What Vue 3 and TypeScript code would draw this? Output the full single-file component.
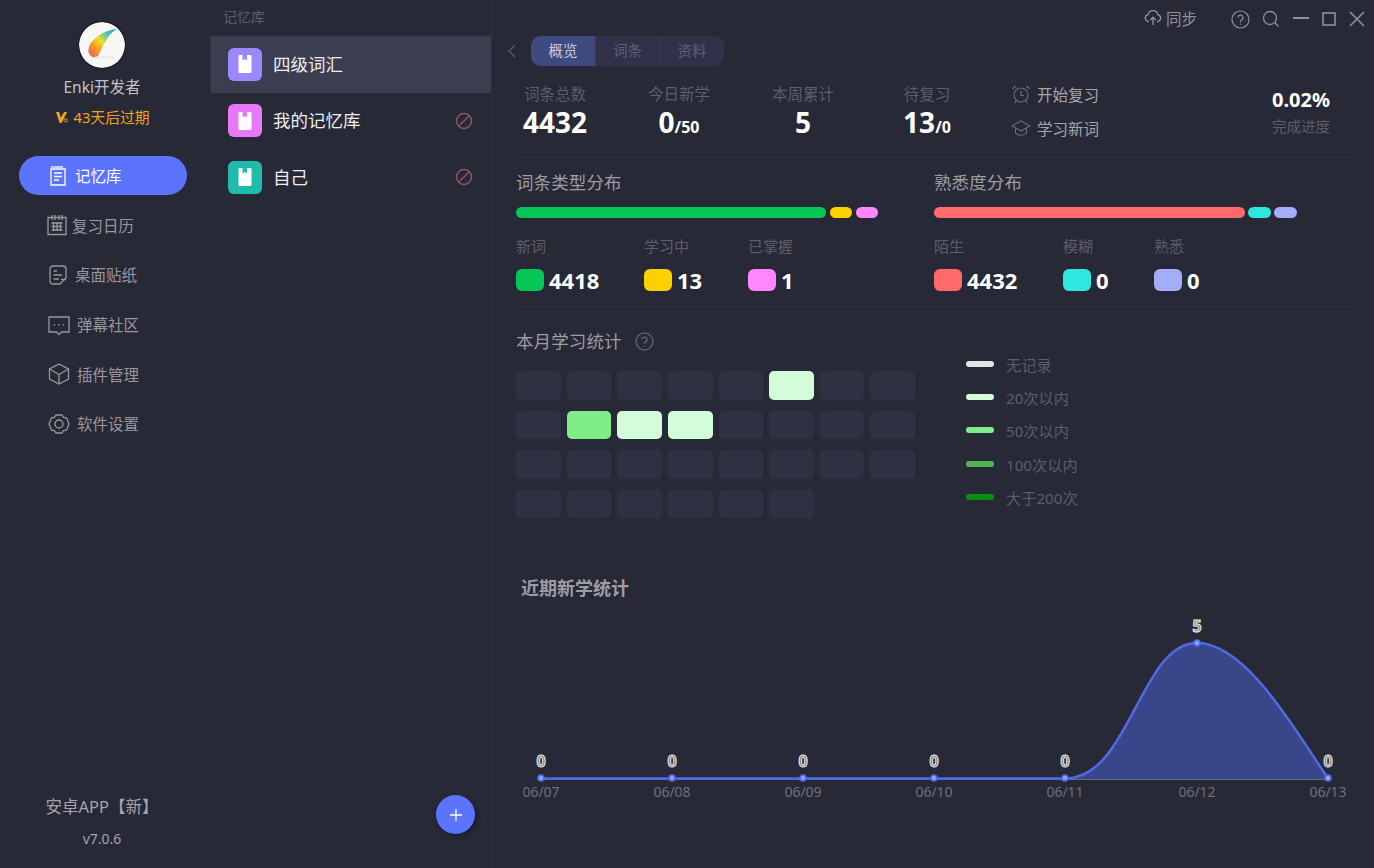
<template>
  <div class="app">
    <!-- 左侧导航 -->
    <aside class="side">
      <div class="avatar">
        <svg width="46" height="46" viewBox="0 0 46 46">
          <defs>
            <linearGradient id="feather" x1="0.05" y1="0.95" x2="0.95" y2="0.05">
              <stop offset="0" stop-color="#ee5f5c" />
              <stop offset="0.3" stop-color="#f6a324" />
              <stop offset="0.5" stop-color="#f3dd2c" />
              <stop offset="0.7" stop-color="#6fcf8f" />
              <stop offset="1" stop-color="#1fa6e6" />
            </linearGradient>
          </defs>
          <circle cx="23" cy="23" r="23" fill="#f7f7f5" />
          <path d="M10 25C12 18 24 8 38 7C30 11 26 20 19 34C16 36 12 35 11 33C9 31 9 28 10 25Z" fill="url(#feather)" />
          <path d="M12 35C19 38 26 33 36 36" fill="none" stroke="#e4dcd6" stroke-width="0.8" />
        </svg>
      </div>
      <div class="user">Enki开发者</div>
      <div class="expire">
        <svg width="12" height="12" viewBox="0 0 13 13">
          <path d="M0 1H3.500L5 7L9 1H12L6 13H4Z" fill="#f0a41e" />
          <circle cx="10.500" cy="10" r="1.800" fill="none" stroke="#f0a41e" />
        </svg>
        <span>43天后过期</span>
      </div>
      <nav class="nav">
        <div v-for="item in navs" :key="item.name" class="nav-item" :class="{ active: item.active }">
          <svg class="nav-icon" :style="{ marginLeft: item.left + 'px', marginRight: item.right + 'px' }" width="22" height="22" viewBox="0 0 22 22" fill="none" stroke="currentColor" stroke-width="1.300">
            <path v-for="(d, i) in item.paths" :key="i" :d="d" />
          </svg>
          <span>{{ item.name }}</span>
        </div>
      </nav>
      <div class="side-foot">
        <div class="android">安卓APP【新】</div>
        <div class="version">v7.0.6</div>
      </div>
    </aside>

    <!-- 记忆库列表 -->
    <section class="list">
      <div class="list-title">记忆库</div>
      <div v-for="book in books" :key="book.name" class="book" :class="{ current: book.current }">
        <div class="book-icon" :style="{ background: book.color }">
          <svg width="16" height="20" viewBox="0 0 16 20">
            <path d="M2.500 1H5.500V6.500L7.750 5L10 6.500V1H13.500Q14.500 1 14.500 2V18Q14.500 19 13.500 19H2.500Q1.500 19 1.500 18V2Q1.500 1 2.500 1Z" fill="#fff" />
          </svg>
        </div>
        <span class="book-name">{{ book.name }}</span>
        <svg v-if="!book.current" class="ban" width="18" height="18" viewBox="0 0 18 18" fill="none" stroke="#8d5563" stroke-width="1.500">
          <circle cx="9" cy="9" r="7.500" />
          <path d="M4 14L14 4" />
        </svg>
      </div>
      <div class="add-btn">
        <svg width="12" height="12" viewBox="0 0 12 12" stroke="#fff" stroke-width="1.300">
          <path d="M6 0V12M0 6H12" />
        </svg>
      </div>
    </section>

    <!-- 主内容 -->
    <main class="main">
      <header class="top">
        <div class="sync">
          <svg width="18" height="16" viewBox="0 0 18 16" fill="none" stroke="#8f9099" stroke-width="1.300">
            <path d="M5 11.500H4.500A3.500 3.500 0 0 1 4 4.600A5 5 0 0 1 13.800 4.600A3.500 3.500 0 0 1 13.500 11.500H13" />
            <path d="M9 15V7.500M6.200 10L9 7.200L11.800 10" />
          </svg>
          <span>同步</span>
        </div>
        <div class="win-btns">
          <svg class="help" width="19" height="19" viewBox="0 0 19 19" fill="none" stroke="#8f9099" stroke-width="1.200">
            <circle cx="9.500" cy="9.500" r="8.500" />
            <path d="M7 7.500A2.500 2.500 0 1 1 10.500 10C9.700 10.500 9.500 11 9.500 12M9.500 13.500V14.800" />
          </svg>
          <svg width="18" height="18" viewBox="0 0 18 18" fill="none" stroke="#8f9099" stroke-width="1.300">
            <circle cx="8" cy="8" r="6.500" />
            <path d="M12.800 12.800L16.500 16.500" />
          </svg>
          <svg width="16" height="16" viewBox="0 0 16 16" stroke="#8f9099" stroke-width="2">
            <path d="M0 7H16" />
          </svg>
          <svg width="14" height="14" viewBox="0 0 14 14" fill="none" stroke="#8f9099" stroke-width="1.600">
            <rect x="1" y="1" width="12" height="12" />
          </svg>
          <svg width="16" height="16" viewBox="0 0 16 16" stroke="#8f9099" stroke-width="1.600">
            <path d="M1 1L15 15M15 1L1 15" />
          </svg>
        </div>
      </header>

      <div class="tabs-row">
        <svg class="back" width="8" height="14" viewBox="0 0 8 14" fill="none" stroke="#5c5d6b" stroke-width="1.200">
          <path d="M7 1L1 7L7 13" />
        </svg>
        <div class="tabs">
          <div v-for="(tab, i) in tabs" :key="tab" class="tab" :class="{ on: i === 0 }">{{ tab }}</div>
        </div>
      </div>

      <!-- 顶部统计 -->
      <div class="stats">
        <div v-for="s in stats" :key="s.label" class="stat">
          <div class="stat-label">{{ s.label }}</div>
          <div class="stat-num">{{ s.value }}<small v-if="s.sub">{{ s.sub }}</small></div>
        </div>
        <div class="actions">
          <div class="action">
            <svg width="20" height="20" viewBox="0 0 20 20" fill="none" stroke="#6d6e7a" stroke-width="1.100">
              <circle cx="10" cy="11" r="7" />
              <path d="M10 7V11.500H13M1.500 5L4.500 2M18.500 5L15.500 2M5 17L4 19M15 17L16 19" />
            </svg>
            <span>开始复习</span>
          </div>
          <div class="action">
            <svg width="20" height="20" viewBox="0 0 20 20" fill="none" stroke="#6d6e7a" stroke-width="1.100">
              <path d="M10 3L19 8L10 13L1 8Z" />
              <path d="M4.500 10.500V15C7 18 13 18 15.500 15V10.500" />
            </svg>
            <span>学习新词</span>
          </div>
        </div>
        <div class="progress">
          <div class="percent">0.02%</div>
          <div class="stat-label small">完成进度</div>
        </div>
      </div>

      <!-- 分布 -->
      <div class="dists">
        <div v-for="d in dists" :key="d.title" class="dist">
          <div class="sec-title">{{ d.title }}</div>
          <div class="bar" :style="{ gap: d.gap + 'px' }">
            <i v-for="p in d.items" :key="p.name" :style="{ width: p.bar + 'px', background: p.color }"></i>
          </div>
          <div class="dist-items">
            <div v-for="p in d.items" :key="p.name" class="dist-item" :style="{ width: p.col + 'px' }">
              <div class="dist-name">{{ p.name }}</div>
              <div class="dist-val">
                <i :style="{ background: p.color }"></i>
                <b>{{ p.value }}</b>
              </div>
            </div>
          </div>
        </div>
      </div>

      <!-- 本月学习统计 -->
      <div class="month">
        <div class="month-left">
          <div class="sec-title month-title">
            本月学习统计
            <svg width="19" height="19" viewBox="0 0 19 19" fill="none" stroke="#5c5d6b" stroke-width="1.500">
              <circle cx="9.500" cy="9.500" r="8.500" />
              <path d="M7 7.500A2.500 2.500 0 1 1 10.500 10C9.700 10.500 9.500 11 9.500 12M9.500 13.500V14.800" />
            </svg>
          </div>
          <div class="heat">
            <div v-for="(c, i) in cells" :key="i" class="cell" :style="{ background: c }"></div>
          </div>
        </div>
        <div class="legend">
          <div v-for="l in legends" :key="l.name" class="legend-row">
            <i :style="{ background: l.color }"></i>
            <span>{{ l.name }}</span>
          </div>
        </div>
      </div>

      <!-- 近期新学统计 -->
      <div class="chart-title">近期新学统计</div>
      <svg class="chart" width="882" height="210" viewBox="492 602 882 210">
        <path v-for="y in [643, 670, 697, 724, 751]" :key="y" :d="`M541 ${y}H1328`" stroke="#2e2f3d" stroke-width="1" />
        <path d="M541 779.500H1328" stroke="#6a6b7c" stroke-width="1" />
        <path :d="curve + 'L1328 779L541 779Z'" fill="#3a468a" />
        <path :d="curve" fill="none" stroke="#5069e6" stroke-width="2.500" />
        <g v-for="p in points" :key="p.date">
          <circle :cx="p.x" :cy="p.y" r="3" fill="#8ea0ff" stroke="#4f68e8" stroke-width="1.500" />
          <text class="pt-val" :x="p.x" :y="p.y - 11" text-anchor="middle">{{ p.v }}</text>
          <text class="pt-date" :x="p.x" y="797" text-anchor="middle">{{ p.date }}</text>
        </g>
      </svg>
    </main>
  </div>
</template>

<script setup lang="ts">
interface NavItem {
  name: string
  active?: boolean
  left: number
  right: number
  paths: string[]
}

const navs: NavItem[] = [
  {
    name: '记忆库',
    active: true,
    left: 28,
    right: 6,
    paths: ['M4 4H18V20H4Z', 'M4 2H16', 'M7 8H15M7 11.500H15M7 15H12'],
  },
  {
    name: '复习日历',
    left: 27,
    right: 4,
    paths: [
      'M2 3.500H20V20.500H2Z',
      'M6 1V6M9 1V6M13 1V6M16 1V6',
      'M5.500 9H16.500M5.500 12.500H16.500M5.500 16H16.500',
      'M7.500 8V17M11 8V17M14.500 8V17',
    ],
  },
  {
    name: '桌面贴纸',
    left: 28,
    right: 6,
    paths: [
      'M12 20H6Q3 20 3 17V5Q3 2 6 2H16Q19 2 19 5V14L13 20Z',
      'M6.500 7H10M6.500 11H15M6.500 15H12',
      'M14 15.500H19',
    ],
  },
  {
    name: '弹幕社区',
    left: 29,
    right: 7,
    paths: [
      'M1 3H21V18H13.500L11 20.500L8.500 18H1Z',
      'M6.500 10V11.500M11 10V11.500M15.500 10V11.500',
    ],
  },
  {
    name: '插件管理',
    left: 29,
    right: 7,
    paths: ['M11 1L20.500 6V16L11 21L1.500 16V6Z', 'M1.500 6L11 11.500L20.500 6M11 11.500V21'],
  },
  {
    name: '软件设置',
    left: 29,
    right: 7,
    paths: [
      'M8 2H14L15.500 4.300L18.500 4.800L21 11L18.500 17.200L15.500 17.700L14 20H8L6.500 17.700L3.500 17.200L1 11L3.500 4.800L6.500 4.300Z',
      'M15 11A4 4 0 1 1 7 11A4 4 0 1 1 15 11Z',
    ],
  },
]

const books = [
  { name: '四级词汇', color: '#9c88ff', current: true },
  { name: '我的记忆库', color: '#e878f8', current: false },
  { name: '自己', color: '#1fbcae', current: false },
]

const tabs = ['概览', '词条', '资料']

const stats = [
  { label: '词条总数', value: '4432', sub: '' },
  { label: '今日新学', value: '0', sub: '/50' },
  { label: '本周累计', value: '5', sub: '' },
  { label: '待复习', value: '13', sub: '/0' },
]

const dists = [
  {
    title: '词条类型分布',
    gap: 4,
    items: [
      { name: '新词', value: 4418, color: '#04c755', bar: 310, col: 128 },
      { name: '学习中', value: 13, color: '#ffd000', bar: 22, col: 104 },
      { name: '已掌握', value: 1, color: '#ff86ff', bar: 22, col: 100 },
    ],
  },
  {
    title: '熟悉度分布',
    gap: 3,
    items: [
      { name: '陌生', value: 4432, color: '#ff6b6b', bar: 311, col: 129 },
      { name: '模糊', value: 0, color: '#2ee8e0', bar: 23, col: 91 },
      { name: '熟悉', value: 0, color: '#a4aefc', bar: 23, col: 100 },
    ],
  },
]

const EMPTY = '#2f3042'
const LIGHT = '#d3fdd9'
const MID = '#80ee88'
const cells: string[] = Array.from({ length: 30 }, () => EMPTY)
cells[5] = LIGHT
cells[9] = MID
cells[10] = LIGHT
cells[11] = LIGHT

const legends = [
  { name: '无记录', color: '#e4e4e6' },
  { name: '20次以内', color: LIGHT },
  { name: '50次以内', color: MID },
  { name: '100次以内', color: '#52b258' },
  { name: '大于200次', color: '#0b8f12' },
]

const curve = 'M541 778.500H1065C1130 778.500 1140 643 1197 643C1245 643 1292 725 1328 778.500'

const points = [
  { x: 541, y: 778, v: 0, date: '06/07' },
  { x: 672, y: 778, v: 0, date: '06/08' },
  { x: 803, y: 778, v: 0, date: '06/09' },
  { x: 934, y: 778, v: 0, date: '06/10' },
  { x: 1065, y: 778, v: 0, date: '06/11' },
  { x: 1197, y: 643, v: 5, date: '06/12' },
  { x: 1328, y: 778, v: 0, date: '06/13' },
]
</script>

<style>
html,
body {
  margin: 0;
  padding: 0;
  background: #282936;
}
</style>

<style scoped>
.app {
  width: 1374px;
  height: 868px;
  display: flex;
  overflow: hidden;
  background: #282936;
  font-family: "Noto Sans", "Noto Sans CJK SC", sans-serif;
  color: #8f9099;
}

.side {
  width: 211px;
  flex: none;
  border-right: 1px solid #2e2f3d;
  display: flex;
  flex-direction: column;
  align-items: center;
  padding: 22px 6px 0 0;
  box-sizing: border-box;
}

.avatar {
  width: 46px;
  height: 46px;
  border-radius: 50%;
  box-shadow: 0 0 0 1px #1c1d28;
  overflow: hidden;
}

.user {
  margin-top: 7px;
  font-size: 15.500px;
  line-height: 24px;
  color: #c2c3c9;
}

.expire {
  margin: 6px 0 0 2px;
  display: flex;
  align-items: center;
  gap: 5px;
  font-size: 14.800px;
  line-height: 24px;
  color: #f0a41e;
}

.nav {
  align-self: stretch;
  margin: 27px 17px 0 19px;
  display: flex;
  flex-direction: column;
  gap: 10.700px;
}

.nav-item {
  height: 39px;
  border-radius: 20px;
  display: flex;
  align-items: center;
  font-size: 15.500px;
  color: #96979f;
}

.nav-item.active {
  background: #5b74fb;
  color: #fff;
}

.nav-icon {
  flex: none;
}

.side-foot {
  margin-top: auto;
  padding-bottom: 17px;
  text-align: center;
}

.android {
  font-size: 16.500px;
  line-height: 24px;
  color: #a4a5ad;
  text-spacing-trim: space-all;
}

.version {
  margin-top: 8px;
  font-size: 14px;
  line-height: 24px;
  color: #a4a5ad;
}

.list {
  position: relative;
  width: 281px;
  flex: none;
  border-right: 1px solid #2e2f3d;
  box-sizing: border-box;
}

.list-title {
  height: 36px;
  padding-left: 12px;
  font-size: 14px;
  line-height: 33px;
  color: #5c5d6b;
}

.book {
  height: 56.500px;
  display: flex;
  align-items: center;
  padding: 0 18px 0 17px;
}

.book.current {
  background: #3b3d50;
}

.book-icon {
  width: 34px;
  height: 33px;
  border-radius: 6px;
  display: flex;
  align-items: center;
  justify-content: center;
}

.book-name {
  margin-left: 11px;
  padding-bottom: 2px;
  font-size: 17.500px;
  color: #eceded;
}

.ban {
  margin-left: auto;
}

.add-btn {
  position: absolute;
  left: 225px;
  top: 795px;
  width: 39px;
  height: 39px;
  border-radius: 50%;
  background: #5b74fb;
  box-shadow: 2px 2px 5px #171a33;
  display: flex;
  align-items: center;
  justify-content: center;
}

.main {
  flex: 1;
  min-width: 0;
}

.top {
  height: 36px;
  display: flex;
  justify-content: flex-end;
  align-items: center;
  padding: 0 9px 0 0;
}

.sync {
  display: flex;
  align-items: center;
  gap: 4px;
  font-size: 15.500px;
  color: #8f9099;
  margin-right: 34px;
}

.win-btns {
  display: flex;
  align-items: center;
  gap: 13px;
  padding-top: 2px;
}

.help {
  margin-right: -1px;
}

.tabs-row {
  height: 30px;
  display: flex;
  align-items: center;
  padding-left: 16px;
}

.tabs {
  margin-left: 15px;
  display: flex;
  height: 30px;
  border-radius: 10px;
  overflow: hidden;
  background: #31324a;
}

.tab {
  width: 64px;
  box-sizing: border-box;
  text-align: center;
  font-size: 14.500px;
  line-height: 29px;
  color: #5f606f;
  border-right: 1px solid #3a3b52;
}

.tab:last-child {
  border-right: 0;
}

.tab.on {
  width: 65px;
  background: #3f4a80;
  color: #c9cbdc;
}

.stats {
  display: flex;
  height: 87px;
  margin: 0 22px 0 24px;
  padding-top: 18px;
  box-sizing: border-box;
  border-bottom: 1px solid #2e2f3d;
}

.stat {
  width: 124px;
  text-align: center;
}

.stat:first-child {
  margin-left: -23px;
}

.stat-label {
  font-size: 15.500px;
  line-height: 20px;
  color: #5c5d6b;
}

.stat-label.small {
  margin-top: 2px;
  font-size: 14.500px;
}

.stat-num {
  margin-top: 1px;
  font-size: 28px;
  line-height: 35px;
  font-weight: 700;
  color: #fff;
}

.stat-num small {
  font-size: 16px;
}

.actions {
  margin-left: 22px;
  margin-top: -7px;
}

.action {
  height: 34px;
  display: flex;
  align-items: center;
  gap: 6px;
  font-size: 15.500px;
  color: #a4a5ad;
}

.progress {
  margin-left: auto;
  margin-right: 22px;
  padding-top: 2px;
  text-align: center;
}

.percent {
  font-size: 20px;
  line-height: 28px;
  font-weight: 700;
  color: #fff;
}

.dists {
  display: flex;
  height: 159px;
  margin: 0 22px 0 24px;
  padding-top: 17px;
  box-sizing: border-box;
  border-bottom: 1px solid #2e2f3d;
}

.dist {
  width: 418px;
}

.sec-title {
  font-size: 17.500px;
  letter-spacing: 0.100px;
  line-height: 24px;
  color: #9c9da4;
}

.bar {
  display: flex;
  margin-top: 13px;
}

.bar i {
  height: 11px;
  border-radius: 6px;
}

.dist-items {
  display: flex;
  margin-top: 17px;
}

.dist-name {
  font-size: 15px;
  line-height: 22px;
  color: #5c5d6b;
}

.dist-val {
  margin-top: 11px;
  display: flex;
  align-items: center;
  gap: 5px;
}

.dist-val i {
  width: 28px;
  height: 22px;
  border-radius: 6px;
}

.dist-val b {
  font-size: 22px;
  line-height: 24px;
  color: #fff;
}

.month {
  display: flex;
  height: 230px;
  margin: 0 22px 0 24px;
  padding-top: 17px;
  box-sizing: border-box;
  border-bottom: 1px solid #2e2f3d;
}

.month-left {
  width: 399px;
}

.month-title {
  display: flex;
  align-items: center;
  gap: 13px;
}

.heat {
  margin-top: 18px;
  display: grid;
  grid-template-columns: repeat(8, 1fr);
  grid-auto-rows: 28.500px;
  gap: 11px 6px;
}

.cell {
  border-radius: 5px;
}

.legend {
  margin-left: 51px;
  padding-top: 18px;
}

.legend-row {
  height: 33.300px;
  display: flex;
  align-items: center;
  font-size: 15.200px;
  color: #5c5d6b;
}

.legend-row i {
  width: 28px;
  height: 6px;
  border-radius: 3px;
  margin-right: 12px;
}

.chart-title {
  margin: 32px 0 0 29px;
  font-size: 18px;
  line-height: 28px;
  font-weight: 700;
  color: #9c9da4;
}

.chart {
  display: block;
}

.pt-val {
  font-size: 16px;
  font-weight: 700;
  fill: #70717c;
  stroke: #f0f0f0;
  stroke-width: 1;
}

.pt-date {
  font-size: 14px;
  fill: #6d6e7a;
}
</style>
